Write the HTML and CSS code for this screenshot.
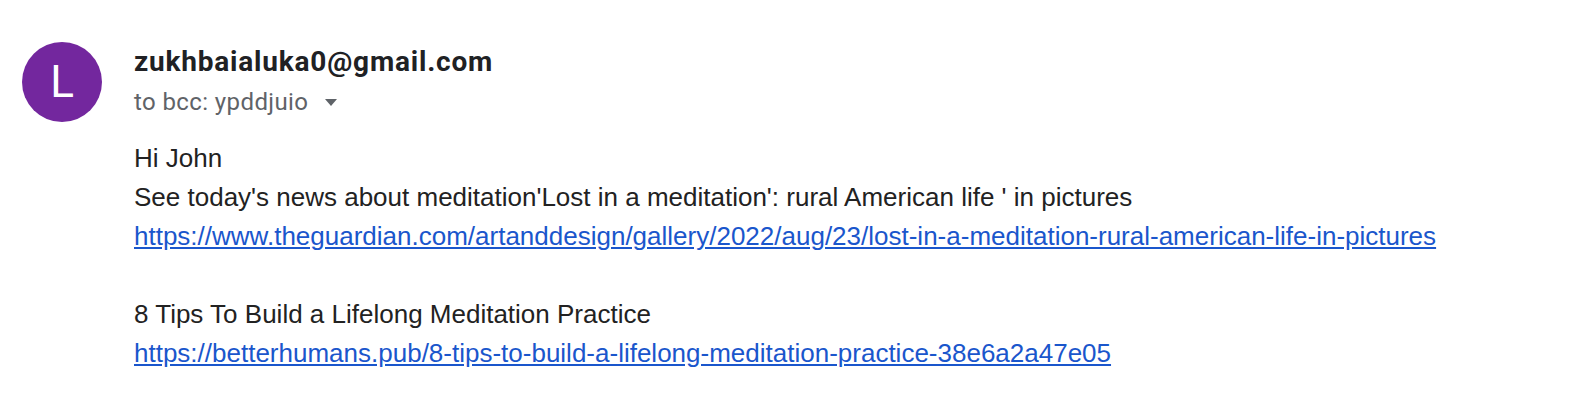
FILE: index.html
```html
<!DOCTYPE html>
<html lang="en">
<head>
<meta charset="utf-8">
<title>Email</title>
<link rel="stylesheet" href="styles.css">
</head>
<body>
<div class="message">
  <div class="avatar">L</div>
  <div class="content">
    <div class="sender">zukhbaialuka0@gmail.com</div>
    <div class="recipients"><span>to bcc: ypddjuio</span><span class="caret"></span></div>
    <div class="body">
      <div>Hi John</div>
      <div>See today's news about meditation'Lost in a meditation': rural American life ' in pictures</div>
      <div><a href="#">https://www.theguardian.com/artanddesign/gallery/2022/aug/23/lost-in-a-meditation-rural-american-life-in-pictures</a></div>
      <div class="blank"></div>
      <div>8 Tips To Build a Lifelong Meditation Practice</div>
      <div><a href="#">https://betterhumans.pub/8-tips-to-build-a-lifelong-meditation-practice-38e6a2a47e05</a></div>
    </div>
  </div>
</div>
</body>
</html>
```
FILE: styles.css
```css
html, body {
  margin: 0;
  padding: 0;
  background: #ffffff;
}

.message {
  display: flex;
  gap: 32px;
  padding: 42px 0 0 22px;
}

.avatar {
  flex: 0 0 80px;
  width: 80px;
  height: 80px;
  border-radius: 50%;
  background: #73279e;
  color: #ffffff;
  font-family: Roboto, "Liberation Sans", sans-serif;
  font-size: 44px;
  font-weight: 400;
  display: flex;
  align-items: center;
  justify-content: center;
}

.content {
  display: flex;
  flex-direction: column;
}

.sender {
  font-family: Roboto, "Liberation Sans", sans-serif;
  font-weight: 700;
  font-size: 28px;
  line-height: 36px;
  letter-spacing: 0.8px;
  color: #202124;
  margin-top: 2px;
}

.recipients {
  font-family: Roboto, "Liberation Sans", sans-serif;
  font-size: 24px;
  line-height: 30px;
  letter-spacing: 0.4px;
  color: #5f6368;
  margin-top: 7px;
  display: flex;
  align-items: center;
}

.caret {
  display: inline-block;
  width: 0;
  height: 0;
  margin-left: 17px;
  border-left: 6.5px solid transparent;
  border-right: 6.5px solid transparent;
  border-top: 7px solid #5f6368;
}

.body {
  margin-top: 22px;
  font-family: "Liberation Sans", Arial, sans-serif;
  font-size: 26px;
  line-height: 39px;
  color: #222222;
}

.blank {
  height: 39px;
}

.body a {
  color: #1a56cc;
  text-decoration: underline;
}
```
